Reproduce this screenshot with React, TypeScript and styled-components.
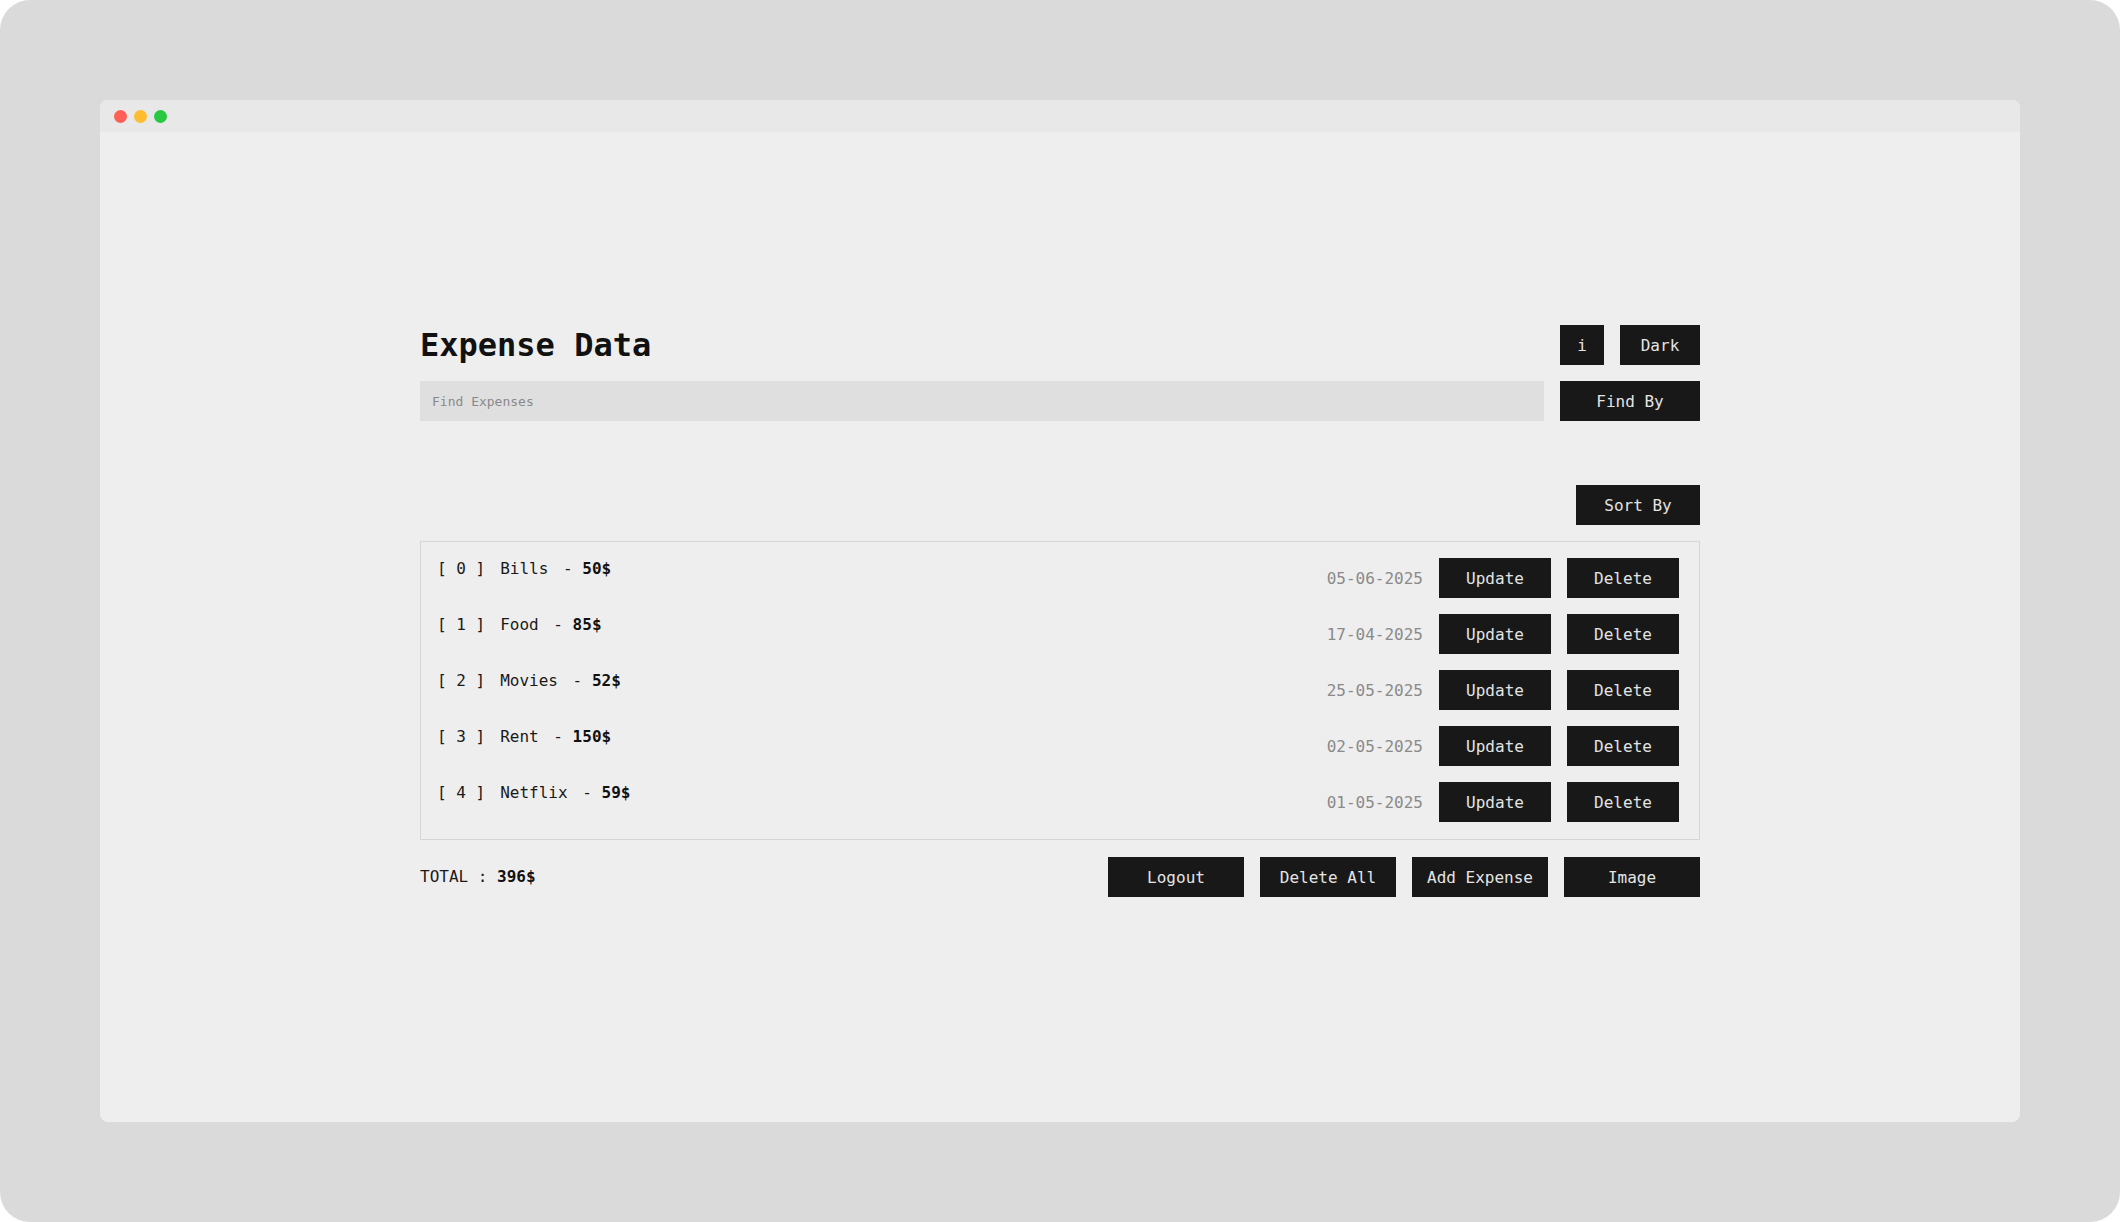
import React from 'react';
import styled, { createGlobalStyle } from 'styled-components';

const GlobalStyle = createGlobalStyle`
  html, body {
    margin: 0;
    padding: 0;
    background: #ffffff;
  }
  * {
    box-sizing: border-box;
  }
`;

const MONO = `"DejaVu Sans Mono", "Liberation Mono", monospace`;

const Frame = styled.div`
  width: 2120px;
  height: 1222px;
  padding: 100px;
  background: #dadada;
  border-radius: 30px;
  font-family: ${MONO};
`;

const Window = styled.div`
  height: 100%;
  display: flex;
  flex-direction: column;
  background: #eeeeee;
  border-radius: 8px;
  overflow: hidden;
`;

const TitleBar = styled.div`
  height: 32px;
  flex-shrink: 0;
  display: flex;
  align-items: center;
  gap: 7px;
  padding-left: 14px;
  background: #e8e8e8;
`;

const Dot = styled.span<{ color: string }>`
  width: 13px;
  height: 13px;
  border-radius: 50%;
  background: ${({ color }) => color};
`;

const Content = styled.div`
  width: 1280px;
  margin: 0 auto;
  padding-top: 193px;
`;

const HeaderRow = styled.div`
  display: flex;
  align-items: center;
  justify-content: space-between;
  height: 40px;
`;

const Title = styled.h1`
  margin: 0;
  font-size: 32px;
  line-height: 40px;
  font-weight: 700;
  color: #111111;
`;

const Group = styled.div`
  display: flex;
  align-items: center;
  gap: 16px;
`;

const Button = styled.button<{ w: number }>`
  width: ${({ w }) => w}px;
  height: 40px;
  padding: 0;
  border: none;
  border-radius: 0;
  background: #181818;
  color: #e4e4e4;
  font-family: ${MONO};
  font-size: 16px;
  cursor: pointer;
  flex-shrink: 0;
`;

const SearchRow = styled.div`
  display: flex;
  gap: 16px;
  margin-top: 16px;
`;

const SearchInput = styled.input`
  flex: 1;
  height: 40px;
  border: none;
  outline: none;
  padding: 0 12px;
  background: #dfdfdf;
  font-family: ${MONO};
  font-size: 13px;
  color: #222;
  &::placeholder {
    color: #8a8a8a;
  }
`;

const SortRow = styled.div`
  display: flex;
  justify-content: flex-end;
  margin-top: 64px;
`;

const List = styled.div`
  margin-top: 16px;
  border: 1px solid #d6d6d6;
  padding: 16px 20px 17px 16px;
  display: flex;
  flex-direction: column;
  gap: 16px;
`;

const Row = styled.div`
  display: flex;
  align-items: flex-start;
  justify-content: space-between;
  height: 40px;
`;

const ItemText = styled.div`
  font-size: 16px;
  line-height: 22px;
  color: #1a1a1a;
  white-space: pre;
`;

const Index = styled.span`
  margin-right: 15px;
`;

const Price = styled.span`
  margin-left: 5px;
`;

const Amount = styled.b`
  font-weight: 700;
  color: #111;
`;

const DateText = styled.span`
  font-size: 16px;
  color: #8a8a8a;
`;

const Footer = styled.div`
  display: flex;
  align-items: center;
  justify-content: space-between;
  margin-top: 17px;
`;

const Total = styled.div`
  font-size: 16px;
  line-height: 22px;
  color: #1a1a1a;
  white-space: pre;
`;

const expenses = [
  { name: 'Bills', amount: 50, date: '05-06-2025' },
  { name: 'Food', amount: 85, date: '17-04-2025' },
  { name: 'Movies', amount: 52, date: '25-05-2025' },
  { name: 'Rent', amount: 150, date: '02-05-2025' },
  { name: 'Netflix', amount: 59, date: '01-05-2025' },
];

export default function App() {
  const total = expenses.reduce((sum, e) => sum + e.amount, 0);
  return (
    <>
      <GlobalStyle />
      <Frame>
        <Window>
          <TitleBar>
            <Dot color="#fe5f57" />
            <Dot color="#febc2e" />
            <Dot color="#28c840" />
          </TitleBar>
          <Content>
            <HeaderRow>
              <Title>Expense Data</Title>
              <Group>
                <Button w={44}>i</Button>
                <Button w={80}>Dark</Button>
              </Group>
            </HeaderRow>
            <SearchRow>
              <SearchInput placeholder="Find Expenses" />
              <Button w={140}>Find By</Button>
            </SearchRow>
            <SortRow>
              <Button w={124}>Sort By</Button>
            </SortRow>
            <List>
              {expenses.map((e, i) => (
                <Row key={i}>
                  <ItemText>
                    <Index>[ {i} ]</Index>
                    {e.name}
                    <Price>
                      {' - '}
                      <Amount>{e.amount}$</Amount>
                    </Price>
                  </ItemText>
                  <Group>
                    <DateText>{e.date}</DateText>
                    <Button w={112}>Update</Button>
                    <Button w={112}>Delete</Button>
                  </Group>
                </Row>
              ))}
            </List>
            <Footer>
              <Total>
                TOTAL : <Amount>{total}$</Amount>
              </Total>
              <Group>
                <Button w={136}>Logout</Button>
                <Button w={136}>Delete All</Button>
                <Button w={136}>Add Expense</Button>
                <Button w={136}>Image</Button>
              </Group>
            </Footer>
          </Content>
        </Window>
      </Frame>
    </>
  );
}
